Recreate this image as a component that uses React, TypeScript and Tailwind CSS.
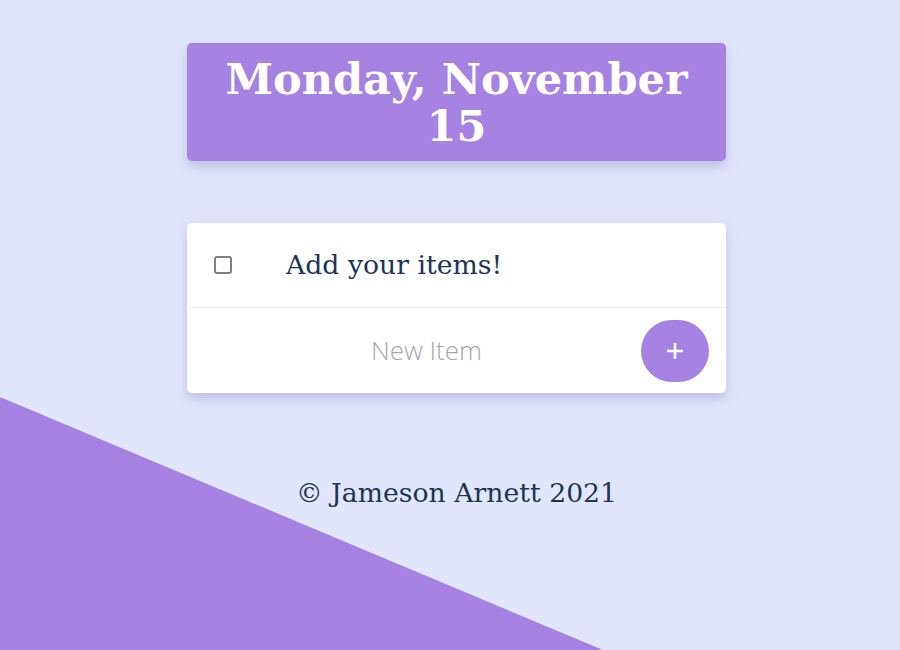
import React from "react";

export default function App() {
  return (
    <div className="relative w-full min-h-[650px] h-[650px] overflow-hidden bg-[#e1e6fb]" style={{ fontFamily: '"DejaVu Serif", serif' }}>
      <div className="absolute inset-0 bg-[#a683e3] [clip-path:polygon(0_397px,603px_650px,0_650px)]" />
      <div className="relative flex flex-col items-center pl-[13px]">
        <div className="mt-[43px] w-[539px] rounded-[5px] bg-[#a683e3] pt-[13px] pb-[11px] text-center shadow-[0_6px_12px_rgba(120,120,180,0.35)]">
          <h1 className="text-[43px] leading-[47px] font-bold text-white px-4">Monday, November 15</h1>
        </div>
        <div className="mt-[62px] w-[539px] rounded-[5px] bg-white shadow-[0_6px_12px_rgba(120,120,180,0.35)]">
          <div className="flex h-[85px] items-center border-b border-[#eeeeee]">
            <div className="ml-[27px] h-[18px] w-[18px] rounded-[3px] border-2 border-[#808080]" />
            <span className="ml-[54px] text-[26.7px] text-[#1d3557]">Add your items!</span>
          </div>
          <div className="relative flex h-[85px] items-center">
            <input
              placeholder="New Item"
              className="w-full bg-transparent text-center text-[26px] font-light outline-none placeholder:text-[#a6a6a6] pr-[60px]"
              style={{ fontFamily: '"Open Sans", sans-serif' }}
            />
            <button className="absolute right-[17px] top-[12px] flex h-[62px] w-[68px] items-center justify-center rounded-full bg-[#a683e3]">
              <svg width="20" height="20" viewBox="0 0 20 20">
                <path d="M10 2v16M2 10h16" stroke="white" strokeWidth="2.5" />
              </svg>
            </button>
          </div>
        </div>
        <p className="mt-[80px] text-[26.7px] text-[#1d3557]">© Jameson Arnett 2021</p>
      </div>
    </div>
  );
}
